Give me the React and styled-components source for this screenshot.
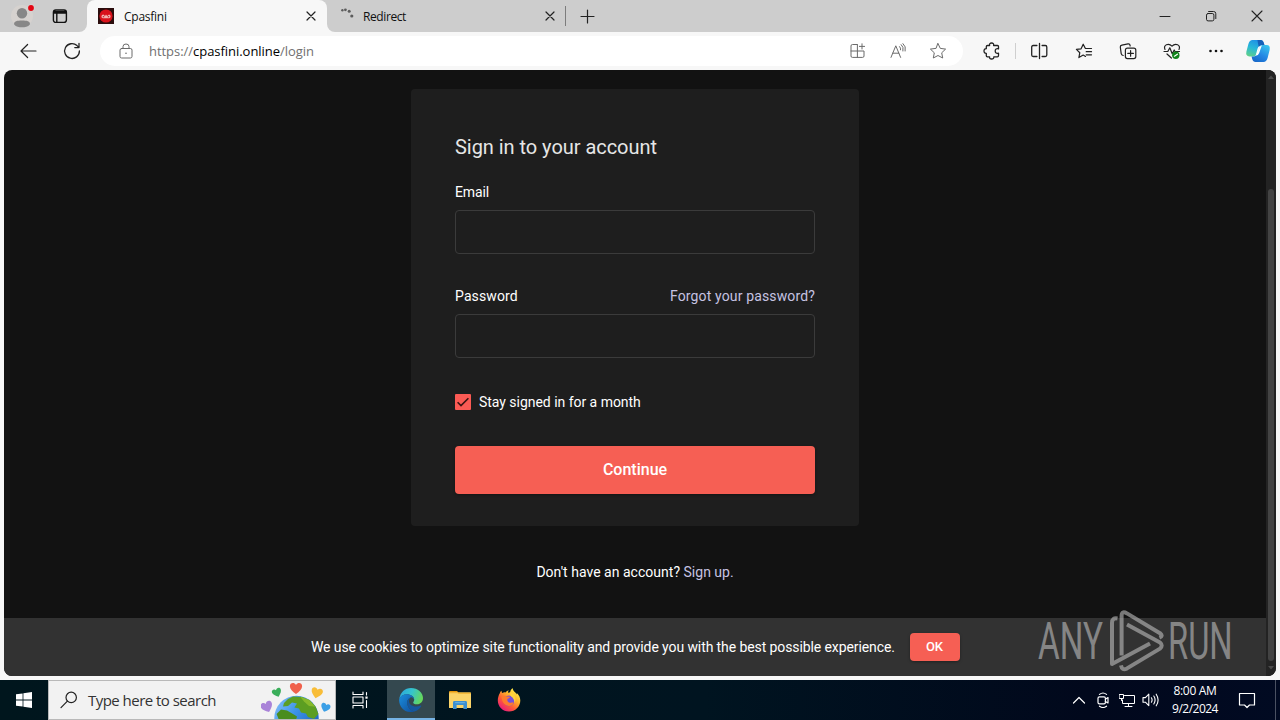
import React, { useState } from 'react';
import styled, { createGlobalStyle } from 'styled-components';

const GlobalStyle = createGlobalStyle`
  :root {
    --strip: #cdcdcd;
    --chrome: #f7f7f7;
    --page: #121212;
    --card: #1e1e1e;
    --accent: #f65f54;
    --link: #c6c3e2;
    --ui-font: "Open Sans", "Noto Sans", sans-serif;
    --page-font: Roboto, "Liberation Sans", sans-serif;
  }

  *, *::before, *::after {
    box-sizing: border-box;
  }

  body {
    margin: 0;
    overflow: hidden;
  }
`;

const Desktop = styled.div`
  position: relative;
  width: 1280px;
  height: 720px;
  display: flex;
  flex-direction: column;
  background: var(--chrome);
  font-family: var(--ui-font);
  overflow: hidden;

  svg {
    display: block;
    flex: none;
  }
`;

const Text = styled.span`
  white-space: pre;
  font-size: ${({ $size }) => $size || 14}px;
  letter-spacing: ${({ $track }) => $track || 0}px;
  color: ${({ $color }) => $color || 'inherit'};
`;

const Slot = styled.div`
  width: ${({ $w }) => $w}px;
  height: 100%;
  flex: none;
  display: grid;
  place-items: center;
`;

/* ---------- tab strip ---------- */

const TabStrip = styled.header`
  height: 32px;
  flex: none;
  display: flex;
`;

const StripStart = styled.div`
  width: 87px;
  padding-left: 4px;
  display: flex;
  background: var(--strip);
  border-bottom-right-radius: 8px;
`;

const ActiveSlot = styled.div`
  width: 240px;
  background: linear-gradient(var(--strip) 50%, var(--chrome) 50%);
`;

const Tab = styled.div`
  width: ${({ $active }) => ($active ? 240 : 238)}px;
  height: 32px;
  padding: ${({ $active }) => ($active ? '0 7px 0 11px' : '0 6px 0 12px')};
  display: flex;
  align-items: center;
  border-radius: 8px 8px 0 0;
  background: ${({ $active }) => ($active ? 'var(--chrome)' : 'transparent')};

  span {
    flex: 1;
    margin-left: ${({ $active }) => ($active ? 10 : 8)}px;
    color: #111;
  }
`;

const StripRest = styled.div`
  flex: 1;
  display: flex;
  align-items: center;
  background: var(--strip);
  border-bottom-left-radius: 8px;
`;

const Rule = styled.i`
  width: 1px;
  height: ${({ $h }) => $h}px;
  flex: none;
  background: ${({ $color }) => $color};
`;

const WindowButtons = styled.div`
  height: 100%;
  margin-left: auto;
  display: flex;
`;

/* ---------- toolbar ---------- */

const Toolbar = styled.div`
  height: 38px;
  flex: none;
  display: flex;
  align-items: center;
  padding-left: 6px;
`;

const AddressBar = styled.div`
  width: 863px;
  height: 30px;
  margin: 0 8px 0 6px;
  padding: 0 5px 0 12px;
  display: flex;
  align-items: center;
  border-radius: 15px;
  background: #fff;
  color: #707070;

  b {
    font-weight: 400;
    color: #000;
  }

  .url {
    flex: 1;
    margin-left: 9px;
  }
`;

/* ---------- page ---------- */

const Viewport = styled.div`
  height: 606px;
  margin: 0 4px 4px;
  flex: none;
  display: flex;
  border-radius: 8px;
  background: var(--page);
  font-family: var(--page-font);
  color: #fff;
  overflow: hidden;
`;

const Page = styled.main`
  flex: 1;
  padding-top: 19px;
  display: flex;
  flex-direction: column;
  align-items: center;
`;

const Card = styled.form`
  width: 448px;
  height: 437px;
  padding: 46px 44px 32px;
  border-radius: 4px;
  background: var(--card);
`;

const Title = styled.h1`
  height: 24px;
  margin: 0;
  font-size: 20px;
  font-weight: 400;
  line-height: 24px;
  letter-spacing: -.04px;
  color: #e6e6e6;
`;

const Row = styled.div`
  height: 20px;
  margin-top: ${({ $top }) => $top}px;
  display: flex;
  align-items: center;
  justify-content: ${({ $spread }) => ($spread ? 'space-between' : 'flex-start')};
  gap: 8px;
  line-height: 20px;
`;

const Field = styled.input`
  display: block;
  width: 100%;
  height: 44px;
  margin-top: 8px;
  padding: 0 12px;
  border: 1px solid #3b3b3b;
  border-radius: 4px;
  outline: none;
  background: transparent;
  color: #fff;
  font: 14px var(--page-font);
`;

const CheckBox = styled.button`
  width: 16px;
  height: 16px;
  padding: 0;
  border: none;
  border-radius: 1px;
  background: ${({ $on }) => ($on ? '#fb5a54' : '#333')};
  cursor: pointer;
`;

const Button = styled.button`
  width: ${({ $w }) => $w};
  height: ${({ $h }) => $h}px;
  margin: ${({ $margin }) => $margin};
  padding: 0 ${({ $nudge }) => $nudge || 0}px 2px 0;
  border: none;
  border-radius: 4px;
  background: var(--accent);
  box-shadow: 0 1px 3px rgba(0, 0, 0, .35);
  color: #fff;
  font: 500 14px var(--page-font);
  cursor: pointer;
`;

const SignUp = styled.p`
  height: 20px;
  margin: 36px 0 0;
  line-height: 20px;
`;

const CookieBar = styled.div`
  width: 100%;
  height: 58px;
  margin-top: auto;
  display: flex;
  align-items: center;
  padding-left: 307px;
  background: #323232;
`;

const CookieText = styled.p`
  width: 599px;
  height: 20px;
  margin: 0;
  line-height: 20px;
  white-space: nowrap;
`;

const Scrollbar = styled.div`
  width: 10px;
  padding: 5px 2px;
  display: flex;
  flex-direction: column;
  align-items: center;
  background: #232323;
`;

const Thumb = styled.div`
  width: 6px;
  height: 472px;
  margin: 110px 0 5px;
  border-radius: 3px;
  background: #434343;
`;

const Watermark = styled.div`
  position: absolute;
  left: 1038px;
  top: 606px;
  height: 72px;
  display: flex;
  opacity: .64;
  color: #b4b4b4;
  font: 51.5px/72px var(--page-font);
`;

const WatermarkWord = styled.span`
  width: ${({ $w }) => $w}px;
  transform: scaleX(${({ $squeeze }) => $squeeze});
  transform-origin: 0 50%;
  white-space: nowrap;
`;

/* ---------- taskbar ---------- */

const Taskbar = styled.footer`
  height: 40px;
  flex: none;
  display: flex;
  align-items: center;
  background: linear-gradient(90deg, #00161d 0%, #001420 55%, #01081c 85%, #010a22 100%);
  color: #fff;
`;

const SearchBox = styled.div`
  width: 288px;
  height: 40px;
  padding-left: 11px;
  display: flex;
  align-items: center;
  border: 1px solid #b9b9b9;
  background: #f2f2f2;
  color: #333;
  overflow: hidden;

  span {
    flex: 1;
    margin-left: 10px;
  }
`;

const TaskButton = styled.div`
  width: 48px;
  height: 40px;
  margin-left: ${({ $gap }) => $gap || 0}px;
  flex: none;
  display: grid;
  place-items: center;
  background: ${({ $active }) => ($active ? '#34484f' : 'transparent')};
  box-shadow: ${({ $active }) => ($active ? 'inset 0 -2px #76b3e4' : 'none')};
`;

const Tray = styled.div`
  height: 40px;
  margin-left: auto;
  display: flex;
`;

const Clock = styled.div`
  width: 64px;
  display: flex;
  flex-direction: column;
  align-items: center;
  padding-top: 2px;
  line-height: 18px;
`;

const ShowDesktop = styled.div`
  width: 5px;
  margin-left: 8px;
  border-left: 1px solid #4a5162;
`;

const Line = ({ size = 16, w = 1, color = '#222', children, fill = 'none' }) => (
  <svg
    width={size}
    height={size}
    viewBox={`0 0 ${size} ${size}`}
    fill={fill}
    stroke={color}
    strokeWidth={w}
    strokeLinecap="round"
    strokeLinejoin="round"
  >
    {children}
  </svg>
);

const CloseIcon = ({ size = 8, w = 1.2 }) => (
  <Line size={size + 2} w={w}>
    <path d={`M1 1 L${size + 1} ${size + 1} M${size + 1} 1 L1 ${size + 1}`} />
  </Line>
);

const Avatar = () => (
  <svg width="28" height="28" viewBox="0 0 28 28">
    <circle cx="14" cy="14" r="11" fill="#d6d2cf" />
    <circle cx="14" cy="11.2" r="5.2" fill="#878787" />
    <path d="M6 22.2 C6 19 9 18.4 14 18.4 S22 19 22 22.2 C20 25 17 25.2 14 25.2 S8 25 6 22.2Z" fill="#878787" />
    <circle cx="23" cy="6" r="3.8" fill="#d6d2cf" />
    <circle cx="23" cy="6" r="2.9" fill="#e30613" />
  </svg>
);

const SiteIcon = () => (
  <svg width="16" height="16" viewBox="0 0 16 16">
    <rect width="16" height="16" fill="#2b0d0d" />
    <circle cx="8" cy="8" r="6.6" fill="#d9121b" />
    <path d="M3.4 8.6 Q3.6 6.4 5.4 6.4 L7 8 L8 6.6 L9.2 8 L11 6.4 Q12.8 6.8 12.6 9 Q12 10.4 10.4 10.2 H5 Q3.4 10.2 3.4 8.6Z" fill="#f3b4b0" />
    <path d="M4.8 8.2 H6.2 V9.2 H4.8Z M9.8 8.2 H11.2 V9.2 H9.8Z" fill="#b40e17" />
  </svg>
);

const Spinner = () => (
  <svg width="16" height="16" viewBox="0 0 16 16" fill="#5c5c5c">
    <circle cx="3.4" cy="2.2" r="1.2" />
    <circle cx="6.4" cy="1.8" r="1.4" />
    <circle cx="10.2" cy="3.3" r="1.5" />
    <circle cx="12.8" cy="8" r="1.6" />
  </svg>
);

const Copilot = () => (
  <svg width="26" height="24" viewBox="0 0 26 24">
    <defs>
      <linearGradient id="cpA" x1="0.6" y1="0" x2="0.2" y2="1">
        <stop offset="0" stopColor="#1e8fe6" />
        <stop offset="0.5" stopColor="#28b8d8" />
        <stop offset="1" stopColor="#5fd08a" />
      </linearGradient>
      <linearGradient id="cpB" x1="0.8" y1="0" x2="0.2" y2="1">
        <stop offset="0" stopColor="#38c4ee" />
        <stop offset="0.55" stopColor="#2487e4" />
        <stop offset="1" stopColor="#1767c8" />
      </linearGradient>
    </defs>
    <path d="M7.5 1 H15.5 Q18 1 18.8 4 L19.4 6 H17 Q14.6 6 13.8 8.6 L11.6 15 Q10.8 17.4 8.6 17.4 H4.4 Q.4 17.4 1.4 12.6 L3.4 5 Q4.5 1 7.5 1Z" fill="url(#cpA)" />
    <path d="M12.4 1 H15.6 Q18 1 18.8 4 L19.4 6 H17 Q14.6 6 13.8 8.6Z" fill="#1660b8" />
    <path d="M18.5 23 H10.6 Q8 23 7.2 20 L6.6 17.4 H9 Q11.2 17.4 12 15 L14.4 8.4 Q15.2 6 17.4 6 H21.6 Q25.6 6 24.6 11 L22.6 19 Q21.4 23 18.5 23Z" fill="url(#cpB)" />
    <path d="M12.6 9.4 Q13.2 7.2 15 7 Q14.4 8 13.9 9.6 L12.2 14.6 Q11.6 16.2 10.6 16.8Z M14.6 8.2 Q15.3 6.6 16.8 6.6 L14.2 14 Q13.4 16.6 10.6 16.8 Q11.6 16.2 12.1 14.8Z" fill="#fff" />
  </svg>
);

const ToolbarActions = () => (
  <>
    <Slot $w={41}>
      <Line size={18} w={1.3}>
        <path d="M4.5 3.5 H6.6 C6.2 1.8 7.1 1 8.6 1 S11 1.8 10.6 3.5 H14.5 Q15.5 3.5 15.5 4.6 V6.9 C13.4 6.3 12.2 7.3 12.2 9 S13.4 11.7 15.5 11.1 V13.6 Q15.5 14.8 14.4 14.8 H10.8 C11 16.4 10.1 17 8.6 17 S6.4 16.4 6.6 14.8 H4.4 Q3.3 14.8 3.3 13.7 V11.3 C1.8 11.4 1 10.5 1 9 S1.8 6.6 3.3 6.7 V4.7 Q3.3 3.5 4.5 3.5Z" />
      </Line>
    </Slot>
    <Slot $w={7}><Rule $h={16} $color="#cfcfcf" /></Slot>
    <Slot $w={40}>
      <Line size={18} w={1.3}>
        <path d="M9.5 1.5 V16.5 M6.9 3.5 H3.2 Q1.7 3.5 1.7 5 V13 Q1.7 14.5 3.2 14.5 H6.9 M12.1 3.5 H15.3 Q16.8 3.5 16.8 5 V13 Q16.8 14.5 15.3 14.5 H12.1" />
      </Line>
    </Slot>
    <Slot $w={49}>
      <Line size={18} w={1.2}>
        <path d="M10.5 14.4 L8.2 13.1 L3.9 15.6 L4.8 10.7 L1.4 7.4 L6.1 6.8 L8.2 2.2 L10.4 6.5 H16.5 M11.2 9.7 H16.5 M11.2 12.8 H16.5" />
      </Line>
    </Slot>
    <Slot $w={40}>
      <Line size={18} w={1.2}>
        <path d="M4.2 13.5 Q2.5 13.2 2.2 11.6 L1.3 5 Q1.2 3.4 2.9 3.1 L9 1.9 Q10.8 1.6 11.1 3.4 V4" />
        <rect x="6.4" y="6.2" width="10.4" height="10.4" rx="2" />
        <path d="M11.6 8.6 V14.2 M8.8 11.4 H14.4" />
      </Line>
    </Slot>
    <Slot $w={48}>
      <Line size={18} w={1.2}>
        <path d="M2 7.4 C-.2 3 5.6 .4 9 4.2 C12.4 .4 18.2 3 16 7.4 M1 9.5 H4.8 L6.8 5.8 L9.2 11.8 L11.2 8 L12 9.5 H16.5 M4 12 L8.4 16" />
        <circle cx="12.8" cy="13.2" r="3.7" fill="#11841b" stroke="none" />
        <path d="M11.4 14.2 L14.4 12.2" stroke="#fff" />
      </Line>
    </Slot>
    <Slot $w={40}>
      <svg width="16" height="4" viewBox="0 0 16 4" fill="#111">
        <circle cx="2.5" cy="2" r="1.3" />
        <circle cx="8" cy="2" r="1.3" />
        <circle cx="13.5" cy="2" r="1.3" />
      </svg>
    </Slot>
    <Slot $w={44}><Copilot /></Slot>
  </>
);

const EdgeLogo = () => (
  <svg width="24" height="24" viewBox="0 0 24 24">
    <defs>
      <linearGradient id="edTop" x1="0" y1="0.2" x2="1" y2="0.5">
        <stop offset="0" stopColor="#2ba6dd" />
        <stop offset="0.5" stopColor="#35c4cd" />
        <stop offset="1" stopColor="#66d85a" />
      </linearGradient>
      <linearGradient id="edLow" x1="0" y1="0" x2="1" y2="1">
        <stop offset="0" stopColor="#1a8ede" />
        <stop offset="1" stopColor="#104d9a" />
      </linearGradient>
    </defs>
    <path d="M.3 11 C1.2 4.6 5.8 0 12 0 C18.8 0 24 4.6 24 10 C24 14 21 16.3 17.8 16.3 C15.5 16.3 14.2 15.4 14.2 14.4 C14.2 13.6 15.2 13.3 15.2 11.4 C15.2 8.6 11.6 6.2 8 6.2 C4.5 6.2 1.6 8.2 .3 11Z" fill="url(#edTop)" />
    <path d="M.1 12 C.5 8.6 4 6.2 8 6.2 C11.8 6.2 15.2 8.6 15.2 11.4 C14.2 9.8 12.6 9.2 11.5 9.4 C9 10.6 7.6 13 8.3 16 C9 20 12 22.6 15.6 23.4 C7 26 .1 20 .1 12Z" fill="url(#edLow)" />
    <path d="M11.5 9.4 C9 10.6 7.6 13 8.3 16 C9.2 20.2 12.2 22.8 15.4 23.4 C18.4 22.6 20.8 20.7 22.2 18.2 C22.5 17.7 22 17.4 21.5 17.6 C16 20.2 9.6 17.6 10 12.6 C10.1 11.2 10.6 10.2 11.5 9.4Z" fill="#15579e" />
  </svg>
);

const FolderLogo = () => (
  <svg width="22" height="20" viewBox="0 0 22 20">
    <path d="M0 2 Q0 1 1 1 H8 L10 3 H0Z" fill="#e8990c" />
    <rect y="2.6" width="22" height="15.4" rx=".6" fill="#fbd469" />
    <path d="M0 3.8 H8.6 L10 2.4 H21 Q22 2.4 22 3.4 V4 H0Z" fill="#f3b93a" />
    <path d="M4 19 V12.4 Q4 11 5.4 11 H16.6 Q18 11 18 12.4 V19 H14.4 V15 H7.6 V19Z" fill="#3c8fd0" />
    <path d="M6.2 12.6 H15.8" stroke="#63ade0" strokeWidth="1.2" />
  </svg>
);

const FirefoxLogo = () => (
  <svg width="24" height="24" viewBox="0 0 24 24">
    <defs>
      <linearGradient id="ffx" x1="0.85" y1="0.1" x2="0.2" y2="0.95">
        <stop offset="0" stopColor="#fff04a" />
        <stop offset="0.35" stopColor="#ffae2a" />
        <stop offset="0.65" stopColor="#ff5a36" />
        <stop offset="1" stopColor="#e8197f" />
      </linearGradient>
    </defs>
    <path d="M2.8 5.2 C3.2 4 4 3 4.6 2.8 C4.5 3.8 4.8 4.6 5.3 5 C6.4 4.2 7.6 4.2 8.6 4.4 C9.6 3 10.8 2.6 11.8 2.6 C11 3.4 11 4 11.2 4.8 C12.2 5 12.6 4.2 13.4 3.4 C13.6 1.8 14.6 .6 15.8 .2 C15.8 2.2 17 3.4 18.6 4.8 L19.6 6.4 L19.8 5 C22.2 7 23.3 9.8 23.3 12.6 C23.3 18.8 18.3 23.6 12 23.6 C5.7 23.6 .8 18.8 .8 12.6 C.8 9.8 1.6 7.2 2.8 5.2Z" fill="url(#ffx)" />
    <circle cx="12" cy="12.8" r="5.4" fill="#7650d9" />
    <path d="M4.4 8.6 C6.4 7.4 8.4 7.6 9.6 8.6 L13 8.8 C12.8 10.2 11.2 10.4 10.6 10.8 C10 12 10.2 13.6 12 14.4 C13.8 15.2 15.4 14.2 16.6 14.2 C16.2 17 13.8 18.2 11.6 18 C7.2 17.6 5 13.8 4.4 8.6Z" fill="#ff7b2d" />
    <path d="M14 4 C18 6.4 19.6 10.4 17.6 15 C17.4 11.4 16 9.6 14.2 8.4 C12.8 7.4 12.8 5.6 14 4Z" fill="#ffd43a" />
  </svg>
);

const Heart = ({ x, y, s = 1, r = 0, fill }) => (
  <path
    transform={`translate(${x} ${y}) rotate(${r}) scale(${s})`}
    d="M0 5.6 C-3.4 3 -6 .6 -6 -2.2 C-6 -5.6 -1.8 -6.4 0 -3.4 C1.8 -6.4 6 -5.6 6 -2.2 C6 .6 3.4 3 0 5.6Z"
    fill={fill}
  />
);

const EarthDoodle = () => (
  <svg width="74" height="38" viewBox="261 681 74 38">
    <defs>
      <linearGradient id="sea" x1="0" y1="0" x2="1" y2="0.6">
        <stop offset="0" stopColor="#8cc4fb" />
        <stop offset="0.5" stopColor="#3d94e8" />
        <stop offset="1" stopColor="#1f66c2" />
      </linearGradient>
    </defs>
    <circle cx="296.5" cy="718" r="22.2" fill="url(#sea)" />
    <path d="M284 703 L288 699 L293 696.4 L302 697 L310 700.4 L315.8 707 L318.4 714 L314 719 L308 717 L306 713.4 L301 712.4 L299 708.6 L294.4 707.4 L297 703.6 L292 702.4 L288 706 L283 706.4Z" fill="#5c9e22" />
    <path d="M276.6 714 L281 709.6 L287 710.4 L293 714 L297 716.6 L296 720 H279Z" fill="#4a8d1e" />
    <path d="M300 696.6 L309 699.8 L315.6 706.8 L309 706 L304 701.6Z" fill="#86b92b" />
    <Heart x={277} y={692.6} s={0.78} r={-22} fill="#3aae5a" />
    <Heart x={296} y={688.4} s={1.02} fill="#f0614c" />
    <Heart x={316.8} y={693} s={0.95} r={14} fill="#f8bd38" />
    <Heart x={267} y={707} s={0.98} r={-22} fill="#a983d8" />
    <Heart x={325.4} y={707.6} s={0.78} r={18} fill="#3b9fe6" />
  </svg>
);

const Brand = () => (
  <Watermark>
    <WatermarkWord $w={70} $squeeze={0.645}>ANY</WatermarkWord>
    <svg width="60" height="72" viewBox="1108 606 60 72" fill="none" stroke="currentColor" strokeWidth="4" strokeLinejoin="round">
      <path d="M1117.5 618.5 Q1112 617.5 1112 623 V664 L1150 643.4" />
      <path d="M1121.6 655.5 V616 Q1121.6 610.4 1127 613.4 L1160 633.2 Q1163.6 636 1159.4 637.6" />
      <path d="M1127 624.6 L1160 642.4 Q1163.4 645.4 1160 648.6 L1127 668.4 Q1122 671 1121 665.4" />
    </svg>
    <WatermarkWord $w={70} $squeeze={0.635}>RUN</WatermarkWord>
  </Watermark>
);

const Browser = () => (
  <>
    <TabStrip>
      <StripStart>
        <Slot $w={36}><Avatar /></Slot>
        <Slot $w={40}>
          <Line size={16} w={1.4} color="#111">
            <rect x="1.4" y="2" width="13" height="12.4" rx="2.4" />
            <path d="M2 3.6 H14 M2 5 H14" />
            <path d="M4.8 5 V14" />
          </Line>
        </Slot>
      </StripStart>
      <ActiveSlot>
        <Tab $active>
          <SiteIcon />
          <Text $size={12} $track={-0.25}>Cpasfini</Text>
          <Slot $w={18}><CloseIcon /></Slot>
        </Tab>
      </ActiveSlot>
      <StripRest>
        <Tab>
          <Spinner />
          <Text $size={12} $track={-0.4}>Redirect</Text>
          <Slot $w={18}><CloseIcon /></Slot>
        </Tab>
        <Slot $w={1}><Rule $h={20} $color="#7c7c7c" /></Slot>
        <Slot $w={43}>
          <Line size={17} w={1.2}>
            <path d="M8.5 2 V15 M2 8.5 H15" />
          </Line>
        </Slot>
        <WindowButtons>
          <Slot $w={46}><Line size={12}><path d="M1 6.5 H11" /></Line></Slot>
          <Slot $w={46}>
            <Line size={12}>
              <rect x="1.5" y="3.5" width="7.4" height="7.4" rx="1.6" />
              <path d="M3.6 1.5 H8.6 Q10.8 1.5 10.8 3.7 V8.6" />
            </Line>
          </Slot>
          <Slot $w={46}><CloseIcon size={10} w={1.1} /></Slot>
        </WindowButtons>
      </StripRest>
    </TabStrip>

    <Toolbar>
      <Slot $w={44}>
        <Line size={18} w={1.2}>
          <path d="M17 9 H2 M8.6 2.5 L2 9 L8.6 15.5" />
        </Line>
      </Slot>
      <Slot $w={44}>
        <Line size={18} w={1.3}>
          <path d="M16.4 9 A7.4 7.4 0 1 1 14 3.6 L15.8 5.4 M16 1.4 V5.6 H11.8" />
        </Line>
      </Slot>
      <AddressBar>
        <Slot $w={28}>
          <Line size={16} color="#6b6b6b">
            <rect x="2" y="5.5" width="12" height="9.5" rx="1.6" />
            <path d="M5 5.5 V3.6 Q5 1 8 1 T11 3.6 V5.5" />
            <circle cx="8" cy="10.2" r=".8" fill="#6b6b6b" stroke="none" />
          </Line>
        </Slot>
        <Text className="url" $size={13} $track={-0.04}>https://<b>cpasfini.online</b>/login</Text>
        <Slot $w={40}>
          <Line size={16} color="#6b6b6b">
            <path d="M7 1.5 H2.4 Q1 1.5 1 3 V13 Q1 14.4 2.4 14.4 H12.6 Q14 14.4 14 13 V8 H1 M7.4 1.5 V14.4 M12 .8 V6 M9.4 3.4 H14.6" />
          </Line>
        </Slot>
        <Slot $w={40}>
          <Line size={16} color="#6b6b6b">
            <path d="M1 14.4 L5.8 2.8 L10.6 14.4 M2.8 10.2 H8.8 M9.6 3.6 Q11 5 10.6 6.8 M11.2 1.6 Q14 4 13 8 M13 .6 Q16.4 3.4 15.2 8" />
          </Line>
        </Slot>
        <Slot $w={40}>
          <Line size={18} color="#6b6b6b">
            <path d="M9 1.6 L11.3 6.4 L16.6 7.1 L12.7 10.8 L13.7 16 L9 13.5 L4.3 16 L5.3 10.8 L1.4 7.1 L6.7 6.4Z" />
          </Line>
        </Slot>
      </AddressBar>
      <ToolbarActions />
    </Toolbar>
  </>
);

const SignIn = () => {
  const [staySignedIn, setStaySignedIn] = useState(true);

  return (
    <Viewport>
      <Page>
        <Card onSubmit={(e) => e.preventDefault()}>
          <Title>Sign in to your account</Title>
          <Row $top={23}>
            <Text $track={-0.1}>Email</Text>
          </Row>
          <Field type="email" />
          <Row $top={32} $spread>
            <Text $track={0.12}>Password</Text>
            <Text $track={0.14} $color="var(--link)">Forgot your password?</Text>
          </Row>
          <Field type="password" />
          <Row $top={34}>
            <CheckBox type="button" $on={staySignedIn} onClick={() => setStaySignedIn(!staySignedIn)}>
              {staySignedIn && (
                <svg width="16" height="16" viewBox="0 0 16 16" fill="none" stroke="#3a1413" strokeWidth="1.6">
                  <path d="M2.6 8.2 L6 11.6 L13.4 4.2" />
                </svg>
              )}
            </CheckBox>
            <Text $track={-0.03}>Stay signed in for a month</Text>
          </Row>
          <Button $w="100%" $h={48} $margin="34px 0 0">
            <Text $size={16}>Continue</Text>
          </Button>
        </Card>
        <SignUp>
          <Text $track={0.02}>Don't have an account? </Text>
          <Text $color="var(--link)">Sign up.</Text>
        </SignUp>
        <CookieBar>
          <CookieText>
            <Text $track={-0.095}>We use cookies to optimize site functionality and provide you with the best possible experience.</Text>
          </CookieText>
          <Button $w="50px" $h={28} $margin="0" $nudge={1}>
            <Text $size={13} $track={-0.2}>OK</Text>
          </Button>
        </CookieBar>
      </Page>
      <Scrollbar>
        <svg width="6" height="4" viewBox="0 0 6 4"><path d="M0 4 L3 .5 L6 4Z" fill="#4a4a4a" /></svg>
        <Thumb />
        <svg width="6" height="4" viewBox="0 0 6 4"><path d="M0 0 L3 3.5 L6 0Z" fill="#4a4a4a" /></svg>
      </Scrollbar>
    </Viewport>
  );
};

const SystemTaskbar = () => (
  <Taskbar>
    <TaskButton>
      <svg width="16" height="16" viewBox="0 0 16 16" fill="#fff">
        <path d="M0 2.3 L6.6 1.4 V7.6 H0Z M7.4 1.2 L16 0 V7.6 H7.4Z M0 8.4 H6.6 V14.6 L0 13.7Z M7.4 8.4 H16 V16 L7.4 14.8Z" />
      </svg>
    </TaskButton>
    <SearchBox>
      <Line size={18} w={1.2}>
        <circle cx="11.2" cy="6.4" r="5.2" />
        <path d="M7.4 10.2 L1 16.6" />
      </Line>
      <Text $size={15} $track={-0.53}>Type here to search</Text>
      <EarthDoodle />
    </SearchBox>
    <TaskButton>
      <Line size={18} w={1.1} color="#fff">
        <path d="M2 1 V3.5 H12 V1 M2 17 V14.5 H12 V17 M15.5 1.5 V4 M15.5 9.5 V16.5" />
        <rect x="2" y="6" width="10" height="6" />
        <path d="M14.4 5.5 H16.6 V7.7 H14.4Z" fill="#fff" stroke="none" />
      </Line>
    </TaskButton>
    <TaskButton $active $gap={3}><EdgeLogo /></TaskButton>
    <TaskButton $gap={1}><FolderLogo /></TaskButton>
    <TaskButton $gap={1}><FirefoxLogo /></TaskButton>
    <Tray>
      <Slot $w={24}>
        <Line size={14} w={1.2} color="#fff"><path d="M1.5 10 L7 4.5 L12.5 10" /></Line>
      </Slot>
      <Slot $w={24}>
        <Line size={16} w={1.2} color="#fff">
          <rect x="3" y="4.8" width="7.4" height="7" rx="1.4" />
          <path d="M10.4 7.2 L13 5.6 V11 L10.4 9.4 M4.5 2.4 Q8 -.4 11.5 2.4 M4.5 14.2 Q8 16.8 11.5 14.2" />
        </Line>
      </Slot>
      <Slot $w={24}>
        <Line size={16} color="#fff">
          <path d="M5.5 3.5 H15.5 V11.5 H3.5 V8 M9.5 11.5 V14.5 M6 14.5 H13 M.5 2.5 H4.5 V6.5 H.5Z M2.5 6.5 V8.5" />
        </Line>
      </Slot>
      <Slot $w={24}>
        <Line size={18} w={1.1} color="#fff">
          <path d="M1 6.6 H3.4 L6.8 3.2 V14.6 L3.4 11.2 H1Z M9.4 6.8 Q10.8 9 9.4 11.2 M11.8 5 Q14.4 9 11.8 13 M14.2 3.2 Q18 9 14.2 14.8" />
        </Line>
      </Slot>
      <Clock>
        <Text $size={12} $track={-0.3}>8:00 AM</Text>
        <Text $size={12} $track={-0.5}>9/2/2024</Text>
      </Clock>
      <Slot $w={40}>
        <Line size={18} w={1.2} color="#fff">
          <path d="M1.5 2.5 H16.5 V14 H11.5 L9 16.5 L6.5 14 H1.5Z" />
        </Line>
      </Slot>
      <ShowDesktop />
    </Tray>
  </Taskbar>
);

const App = () => (
  <>
    <GlobalStyle />
    <Desktop>
      <Browser />
      <SignIn />
      <SystemTaskbar />
      <Brand />
    </Desktop>
  </>
);

export default App;
